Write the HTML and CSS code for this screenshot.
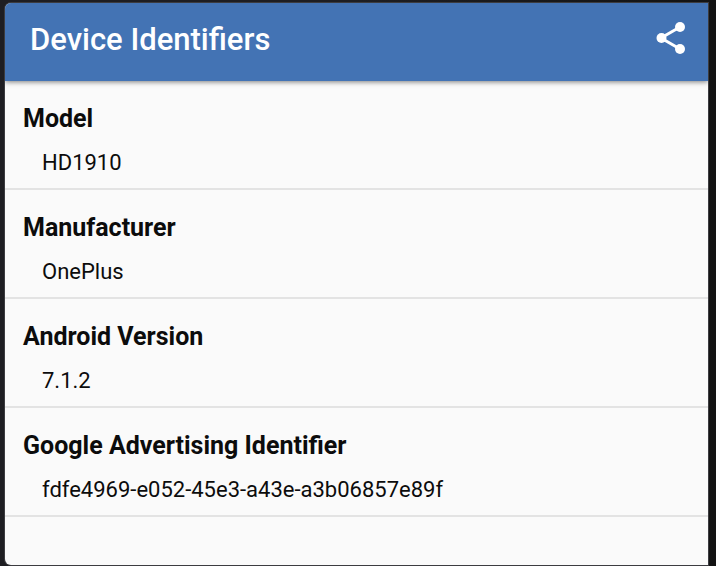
FILE: index.html
```html
<!DOCTYPE html>
<html lang="en">
<head>
<meta charset="utf-8">
<title>Device Identifiers</title>
<link rel="stylesheet" href="styles.css">
</head>
<body>
<main class="screen">
  <header class="app-bar">
    <h1 class="title">Device Identifiers</h1>
    <button class="share" type="button" aria-label="Share">
      <svg class="share-icon" viewBox="0 0 30 34" aria-hidden="true">
        <path d="M24 6 5 17l19 11" fill="none" stroke="currentColor" stroke-width="3"/>
        <circle cx="24" cy="6" r="5"/><circle cx="5.5" cy="17" r="5"/><circle cx="24" cy="28" r="5"/>
      </svg>
    </button>
  </header>
  <dl class="list">
    <div class="item"><dt class="label">Model</dt><dd class="value">HD1910</dd></div>
    <div class="item"><dt class="label">Manufacturer</dt><dd class="value">OnePlus</dd></div>
    <div class="item"><dt class="label">Android Version</dt><dd class="value">7.1.2</dd></div>
    <div class="item"><dt class="label">Google Advertising Identifier</dt><dd class="value">fdfe4969-e052-45e3-a43e-a3b06857e89f</dd></div>
  </dl>
</main>
</body>
</html>
```
FILE: styles.css
```css
* { box-sizing: border-box; }
body {
  margin: 0;
  min-height: 100vh;
  display: flex;
  padding: 3px 8px 1px 5px;
  background: linear-gradient(to right, #1e1e22 50%, #131313);
  font-family: Roboto, sans-serif;
  color: #0c0c0c;
}
.screen {
  flex: 1;
  background: #fafafa;
  border-radius: 6px 0 0 6px;
  box-shadow: 0 0 0 1px #3c3c40;
  overflow: hidden;
}
.app-bar {
  position: relative;
  display: flex;
  align-items: center;
  justify-content: space-between;
  height: 78px;
  padding: 0 22px 4px 25px;
  background: #4373b4;
  color: #fff;
  box-shadow: 0 1px 5px rgba(0, 0, 0, 0.5);
}
.title { margin: 0; font-size: 31px; line-height: 40px; font-weight: 500; }
.share { padding: 0 0 4px; border: 0; background: none; color: inherit; display: flex; }
.share-icon { width: 30px; height: 34px; fill: currentColor; }
.list { margin: 0; }
.item { padding: 22px 18px 9px; border-bottom: 2px solid #e3e3e3; }
.label { font-size: 25px; line-height: 32px; font-weight: 700; }
.value { margin: 12px 0 0 19px; font-size: 22px; line-height: 32px; }
```
